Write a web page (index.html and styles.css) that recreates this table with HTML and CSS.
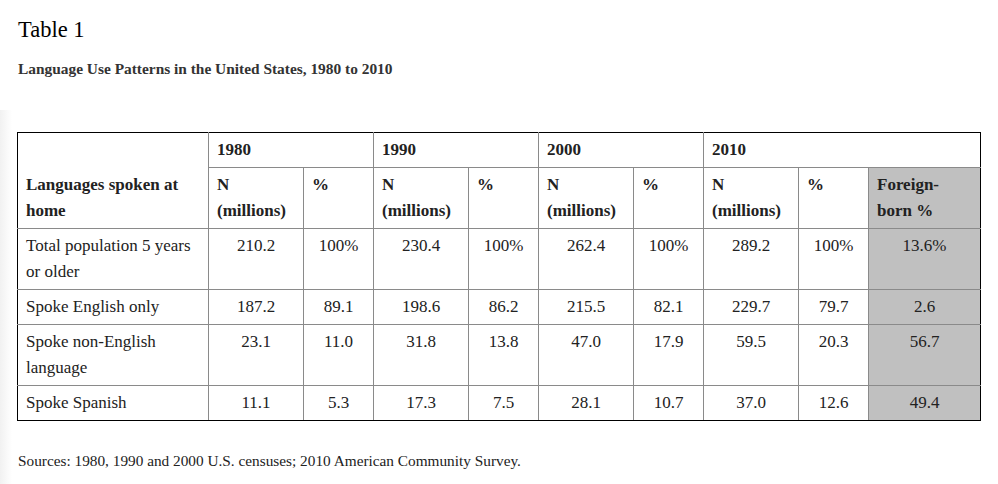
FILE: index.html
```html
<!DOCTYPE html>
<html lang="en">
<head>
<meta charset="utf-8">
<title>Table 1</title>
<link rel="stylesheet" href="styles.css">
</head>
<body>
<main class="page">
  <h1 class="title">Table 1</h1>
  <h2 class="subtitle">Language Use Patterns in the United States, 1980 to 2010</h2>
  <table class="data">
    <colgroup>
      <col class="c-label">
      <col class="c-n"><col class="c-p">
      <col class="c-n"><col class="c-p">
      <col class="c-n"><col class="c-p">
      <col class="c-n"><col class="c-p">
      <col class="c-fb">
    </colgroup>
    <thead>
      <tr>
        <th rowspan="2" class="label-head">Languages spoken at home</th>
        <th colspan="2">1980</th>
        <th colspan="2">1990</th>
        <th colspan="2">2000</th>
        <th colspan="3">2010</th>
      </tr>
      <tr>
        <th>N<br>(millions)</th><th>%</th>
        <th>N<br>(millions)</th><th>%</th>
        <th>N<br>(millions)</th><th>%</th>
        <th>N<br>(millions)</th><th>%</th>
        <th class="fb">Foreign-<br>born %</th>
      </tr>
    </thead>
    <tbody>
      <tr>
        <td class="label">Total population 5 years or older</td>
        <td>210.2</td><td>100%</td>
        <td>230.4</td><td>100%</td>
        <td>262.4</td><td>100%</td>
        <td>289.2</td><td>100%</td>
        <td class="fb">13.6%</td>
      </tr>
      <tr>
        <td class="label">Spoke English only</td>
        <td>187.2</td><td>89.1</td>
        <td>198.6</td><td>86.2</td>
        <td>215.5</td><td>82.1</td>
        <td>229.7</td><td>79.7</td>
        <td class="fb">2.6</td>
      </tr>
      <tr>
        <td class="label">Spoke non-English language</td>
        <td>23.1</td><td>11.0</td>
        <td>31.8</td><td>13.8</td>
        <td>47.0</td><td>17.9</td>
        <td>59.5</td><td>20.3</td>
        <td class="fb">56.7</td>
      </tr>
      <tr>
        <td class="label">Spoke Spanish</td>
        <td>11.1</td><td>5.3</td>
        <td>17.3</td><td>7.5</td>
        <td>28.1</td><td>10.7</td>
        <td>37.0</td><td>12.6</td>
        <td class="fb">49.4</td>
      </tr>
    </tbody>
  </table>
  <p class="source">Sources: 1980, 1990 and 2000 U.S. censuses; 2010 American Community Survey.</p>
</main>
</body>
</html>
```

FILE: styles.css
```css
html {
  background: #fff linear-gradient(to right, #f1f1f1, #fff 12px) no-repeat 0 110px / 13px 100%;
}
body {
  margin: 0;
  font-family: "Liberation Serif", "Times New Roman", serif;
  color: #222;
}
.page {
  padding: 17px 0 0 18px;
}
.title {
  margin: 0;
  font-size: 22.5px;
  line-height: 26px;
  font-weight: normal;
  color: #000;
}
.subtitle {
  margin: 16px 0 0;
  font-size: 15.4px;
  line-height: 20px;
  font-weight: bold;
  color: #333;
}
.data {
  margin: 53px 0 0 -1px;
  border-collapse: collapse;
  table-layout: fixed;
  width: 964px;
  border: 1px solid #000;
  font-size: 17px;
  line-height: 26px;
}
.c-label { width: 191px; }
.c-n { width: 95px; }
.c-p { width: 70px; }
.c-fb { width: 112px; }
.data th,
.data td {
  border: 1px solid #8a8a8a;
  padding: 4px 8px 4px;
  vertical-align: top;
}
.data th {
  text-align: left;
  font-weight: bold;
}
.data thead tr:first-child th {
  border-top-color: #000;
}
.data tbody tr:last-child td {
  border-bottom-color: #000;
}
.data th:first-child,
.data td:first-child {
  border-left-color: #000;
}
.data th:last-child,
.data td:last-child {
  border-right-color: #000;
}
.data th.label-head {
  vertical-align: bottom;
}
.data td {
  text-align: center;
}
.data td.label {
  text-align: left;
}
.data .fb {
  background: #c0c0c0;
}
.source {
  margin: 30px 0 0;
  font-size: 15.3px;
  line-height: 20px;
}
```
